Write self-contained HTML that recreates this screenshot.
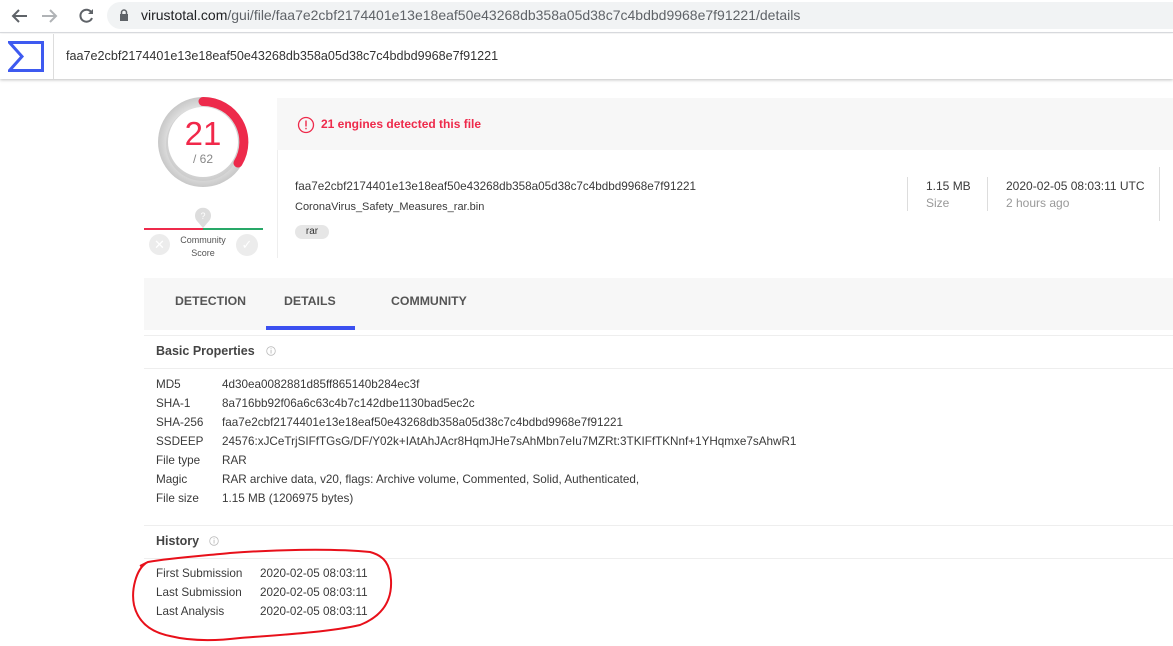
<!DOCTYPE html>
<html><head><meta charset="utf-8"><style>
*{margin:0;padding:0;box-sizing:border-box}
body{width:1173px;height:646px;overflow:hidden;background:#fff;font-family:"Liberation Sans",Arial,sans-serif;position:relative;color:#313131}
.a{position:absolute}
.t{font-size:11.7px;color:#3a3a3a;white-space:nowrap}
.lbl{font-size:11.7px;color:#3a3a3a;white-space:nowrap}
</style></head><body>
<div class="a" style="left:0;top:0;width:1173px;height:33px;background:#fff;border-bottom:1px solid #dadce0"></div>
<svg class="a" style="left:8px;top:6px" width="90" height="20" viewBox="0 0 90 20">
<path d="M19 10H6M11 4L5 10l6 6" fill="none" stroke="#5f6368" stroke-width="2"/>
<path d="M47 10H34M42 4l6 6-6 6" fill="none" stroke="#b0b3b6" stroke-width="2"/>
<path d="M83.5 6.5A6 6 0 1 0 84 12" fill="none" stroke="#5f6368" stroke-width="2"/><path d="M85 3v5h-5z" fill="#5f6368"/>
</svg>
<div class="a" style="left:107px;top:2px;width:1080px;height:27px;background:#f1f3f4;border-radius:14px"></div>
<svg class="a" style="left:119px;top:9px" width="10" height="12"><rect x="1" y="5" width="8" height="7" fill="#5f6368"/><path d="M2.5 5V3.5a2.5 2.5 0 0 1 5 0V5" fill="none" stroke="#5f6368" stroke-width="1.5"/></svg>
<div class="a" style="left:141px;top:7px;font-size:14px;color:#202124">virustotal.com<span style="color:#5f6368">/gui/file/faa7e2cbf2174401e13e18eaf50e43268db358a05d38c7c4bdbd9968e7f91221/details</span></div>
<div class="a" style="left:0;top:34px;width:1173px;height:45px;background:#fff;box-shadow:0 1px 3px rgba(0,0,0,.25)"></div>
<svg class="a" style="left:8px;top:41px" width="36" height="31" viewBox="0 0 36 31"><path d="M1.5 1.5H34.5V29.5H1.5L14 15.5Z" fill="none" stroke="#3e5af0" stroke-width="3"/></svg>
<div class="a" style="left:53px;top:34px;width:1px;height:45px;background:#ddd"></div>
<div class="a" style="left:66px;top:49px;font-size:12.6px;color:#333">faa7e2cbf2174401e13e18eaf50e43268db358a05d38c7c4bdbd9968e7f91221</div>
<svg class="a" style="left:150px;top:90px" width="110" height="110" viewBox="0 0 110 110">
<defs><radialGradient id="g" cx="50%" cy="50%" r="50%"><stop offset="80%" stop-color="#ddd"/><stop offset="100%" stop-color="#c8c8c8"/></radialGradient></defs>
<circle cx="53" cy="52" r="45" fill="url(#g)"/>
<circle cx="53" cy="54" r="37" fill="#bbb" opacity=".35"/>
<circle cx="53" cy="52" r="35" fill="#fff"/>
<path d="M53 11.5A40.5 40.5 0 0 1 88 73" fill="none" stroke="#ed2a4b" stroke-width="9" stroke-linecap="round"/>
</svg>
<div class="a" style="left:173px;top:115px;width:60px;text-align:center;font-size:33px;color:#f1284a">21</div>
<div class="a" style="left:173px;top:152px;width:60px;text-align:center;font-size:12px;color:#888">/ 62</div>
<svg class="a" style="left:193px;top:206px" width="20" height="24"><path d="M10 22l-6-7a8 8 0 1 1 12 0z" fill="#ddd"/><text x="10" y="13" font-size="9" fill="#fff" text-anchor="middle" font-family="Liberation Sans">?</text></svg>
<div class="a" style="left:144px;top:228px;width:59px;height:2px;background:#ee2a4b"></div>
<div class="a" style="left:203px;top:228px;width:60px;height:2px;background:#28a868"></div>
<div class="a" style="left:149px;top:234px;width:21px;height:21px;border-radius:50%;background:#ececec;color:#fff;font-size:13px;text-align:center;line-height:21px">✕</div>
<div class="a" style="left:236px;top:234px;width:22px;height:22px;border-radius:50%;background:#ececec;color:#fff;font-size:13px;text-align:center;line-height:22px">✓</div>
<div class="a" style="left:173px;top:234px;width:60px;text-align:center;font-size:9px;color:#555;line-height:13px">Community<br>Score</div>
<div class="a" style="left:277px;top:98px;width:896px;height:52px;background:#f7f7f7"></div>
<div class="a" style="left:277px;top:150px;width:1px;height:108px;background:#eee"></div>
<svg class="a" style="left:297px;top:116px" width="18" height="18"><circle cx="9" cy="9" r="7.5" fill="none" stroke="#ee2a4b" stroke-width="1.3"/><rect x="8.3" y="4.5" width="1.4" height="6" fill="#ee2a4b"/><rect x="8.3" y="11.8" width="1.4" height="1.5" fill="#ee2a4b"/></svg>
<div class="a" style="left:321px;top:117px;font-size:12px;font-weight:bold;color:#ee2a4b">21 engines detected this file</div>
<div class="a t" style="left:295px;top:180px">faa7e2cbf2174401e13e18eaf50e43268db358a05d38c7c4bdbd9968e7f91221</div>
<div class="a" style="left:295px;top:201px;font-size:11px;color:#3a3a3a">CoronaVirus_Safety_Measures_rar.bin</div>
<div class="a" style="left:295px;top:225px;width:34px;height:14px;border-radius:7px;background:#e6e6e6;font-size:10px;text-align:center;line-height:14px;color:#333">rar</div>
<div class="a" style="left:907px;top:177px;width:1px;height:34px;background:#ddd"></div>
<div class="a" style="left:987px;top:177px;width:1px;height:34px;background:#ddd"></div>
<div class="a" style="left:1159px;top:167px;width:1px;height:54px;background:#ddd"></div>
<div class="a" style="left:926px;top:179px;font-size:12px;color:#3a3a3a">1.15 MB</div>
<div class="a" style="left:926px;top:196px;font-size:12px;color:#999">Size</div>
<div class="a" style="left:1006px;top:179px;font-size:12px;color:#3a3a3a;white-space:nowrap">2020-02-05 08:03:11 UTC</div>
<div class="a" style="left:1006px;top:196px;font-size:12px;color:#999">2 hours ago</div>
<div class="a" style="left:144px;top:278px;width:1029px;height:52px;background:#f7f7f7"></div>
<div class="a" style="left:175px;top:294px;font-size:12.3px;font-weight:bold;color:#555">DETECTION</div>
<div class="a" style="left:284px;top:294px;font-size:12.3px;font-weight:bold;color:#555">DETAILS</div>
<div class="a" style="left:391px;top:294px;font-size:12.3px;font-weight:bold;color:#555">COMMUNITY</div>
<div class="a" style="left:266px;top:326px;width:89px;height:4px;background:#3b50f0"></div>
<div class="a" style="left:144px;top:335px;width:1029px;height:1px;background:#eee"></div>
<div class="a" style="left:156px;top:344px;font-size:12.5px;font-weight:bold;color:#444">Basic Properties</div>
<svg class="a" style="left:266px;top:346px" width="10" height="10"><circle cx="5" cy="5" r="4.3" fill="none" stroke="#bbb" stroke-width=".8"/><rect x="4.6" y="4" width=".9" height="3.5" fill="#bbb"/><rect x="4.6" y="2.3" width=".9" height="1" fill="#bbb"/></svg>
<div class="a" style="left:144px;top:368px;width:1029px;height:1px;background:#eee"></div>
<div class="a lbl" style="left:156px;top:375px;line-height:19px">MD5<br>SHA-1<br>SHA-256<br>SSDEEP<br>File type<br>Magic<br>File size</div>
<div class="a lbl" style="left:222px;top:375px;line-height:19px">4d30ea0082881d85ff865140b284ec3f<br>8a716bb92f06a6c63c4b7c142dbe1130bad5ec2c<br>faa7e2cbf2174401e13e18eaf50e43268db358a05d38c7c4bdbd9968e7f91221<br>24576:xJCeTrjSIFfTGsG/DF/Y02k+IAtAhJAcr8HqmJHe7sAhMbn7eIu7MZRt:3TKIFfTKNnf+1YHqmxe7sAhwR1<br>RAR<br>RAR archive data, v20, flags: Archive volume, Commented, Solid, Authenticated,<br>1.15 MB (1206975 bytes)</div>
<div class="a" style="left:144px;top:525px;width:1029px;height:1px;background:#eee"></div>
<div class="a" style="left:156px;top:534px;font-size:12.5px;font-weight:bold;color:#444">History</div>
<svg class="a" style="left:209px;top:536px" width="10" height="10"><circle cx="5" cy="5" r="4.3" fill="none" stroke="#bbb" stroke-width=".8"/><rect x="4.6" y="4" width=".9" height="3.5" fill="#bbb"/><rect x="4.6" y="2.3" width=".9" height="1" fill="#bbb"/></svg>
<div class="a" style="left:144px;top:558px;width:1029px;height:1px;background:#eee"></div>
<div class="a lbl" style="left:156px;top:564px;line-height:19px">First Submission<br>Last Submission<br>Last Analysis</div>
<div class="a lbl" style="left:260px;top:564px;line-height:19px">2020-02-05 08:03:11<br>2020-02-05 08:03:11<br>2020-02-05 08:03:11</div>
<svg class="a" style="left:0;top:0" width="1173" height="646"><path d="M146 563C136 570 131 590 134 605C138 622 150 632 170 636C190 641 215 641 240 638C280 635 330 632 360 625C385 615 392 598 391 580C390 565 385 556 370 552C330 548 270 550 230 553C200 556 170 558 148 562L140 566" fill="none" stroke="#e8101a" stroke-width="2"/></svg>
</body></html>
